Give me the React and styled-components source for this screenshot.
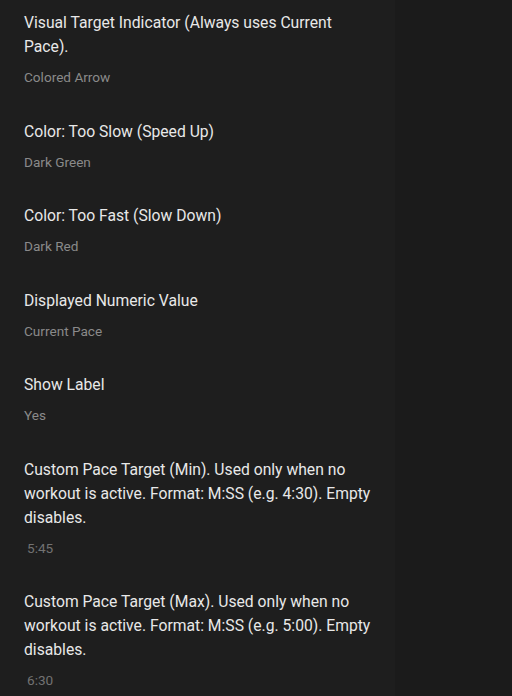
import React from "react";
import styled, { createGlobalStyle } from "styled-components";

const GlobalStyle = createGlobalStyle`
  html, body {
    margin: 0;
    padding: 0;
    background: #1b1b1b;
  }
  body {
    font-family: Roboto, "Noto Sans", "Liberation Sans", sans-serif;
    -webkit-font-smoothing: antialiased;
  }
`;

const Screen = styled.div`
  display: flex;
  width: 512px;
  height: 696px;
  overflow: hidden;
  background: #1b1b1b;
`;

const Panel = styled.div`
  width: 395px;
  flex-shrink: 0;
  background: #1e1e1e;
  display: flex;
  flex-direction: column;
`;

const Item = styled.div`
  padding: 11px 20px 21.5px 24px;
  display: flex;
  flex-direction: column;
  gap: 8px;
`;

const Title = styled.div`
  font-size: 15.7px;
  line-height: 24px;
  color: #e8e8e8;
`;

const Summary = styled.div`
  font-size: 13.6px;
  line-height: 20px;
  color: ${(p) => (p.$input ? "#727272" : "#8a8a8a")};
  padding-left: ${(p) => (p.$input ? "3px" : "0")};
`;

const settings = [
  { title: "Visual Target Indicator (Always uses Current Pace).", value: "Colored Arrow" },
  { title: "Color: Too Slow (Speed Up)", value: "Dark Green" },
  { title: "Color: Too Fast (Slow Down)", value: "Dark Red" },
  { title: "Displayed Numeric Value", value: "Current Pace" },
  { title: "Show Label", value: "Yes" },
  {
    title: "Custom Pace Target (Min). Used only when no workout is active. Format: M:SS (e.g. 4:30). Empty disables.",
    value: "5:45",
    input: true,
  },
  {
    title: "Custom Pace Target (Max). Used only when no workout is active. Format: M:SS (e.g. 5:00). Empty disables.",
    value: "6:30",
    input: true,
  },
];

export default function App() {
  return (
    <>
      <GlobalStyle />
      <Screen>
        <Panel>
          {settings.map((s) => (
            <Item key={s.title}>
              <Title>{s.title}</Title>
              <Summary $input={s.input}>{s.value}</Summary>
            </Item>
          ))}
        </Panel>
      </Screen>
    </>
  );
}
